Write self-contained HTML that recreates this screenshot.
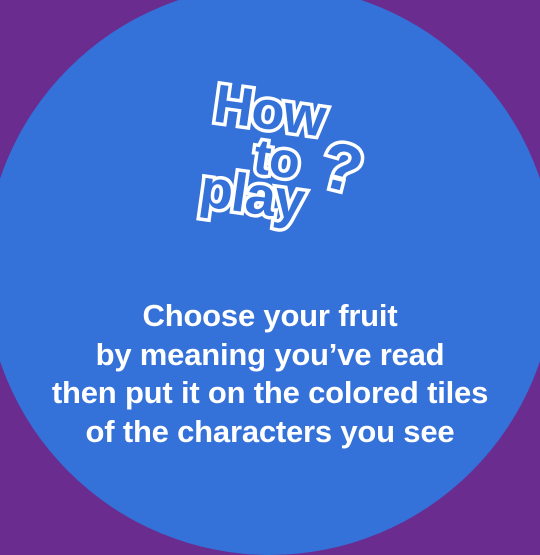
<!DOCTYPE html>
<html><head><meta charset="utf-8"><style>
html,body{margin:0;padding:0}
body{width:540px;height:540px;background:#6a2c8e;position:relative;overflow:hidden;font-family:"Liberation Sans",sans-serif}
.c{position:absolute;left:-15px;top:-15px;width:570px;height:570px;border-radius:50%;background:#3471d9}
.t{position:absolute;color:#3471d9;-webkit-text-stroke:7px #fff;paint-order:stroke fill;font-weight:bold;line-height:1;letter-spacing:-1px}
.txt{position:absolute;left:0;width:540px;top:297px;text-align:center;color:#fff;font-weight:bold;font-size:31px;line-height:38.5px;letter-spacing:-0.2px}
</style></head><body>
<div class="c"></div>
<div class="t" style="left:214px;top:84px;font-size:54px;transform:rotate(8deg)">How</div>
<div class="t" style="left:254px;top:134px;font-size:50px;transform:rotate(8deg)">to</div>
<div class="t" style="left:200px;top:168px;font-size:54px;transform:rotate(8deg)">play</div>
<div class="t" style="left:322px;top:134px;font-size:66px;transform:rotate(14deg)">?</div>
<div class="txt">Choose your fruit<br>by meaning you’ve read<br>then put it on the colored tiles<br>of the characters you see</div>
</body></html>
